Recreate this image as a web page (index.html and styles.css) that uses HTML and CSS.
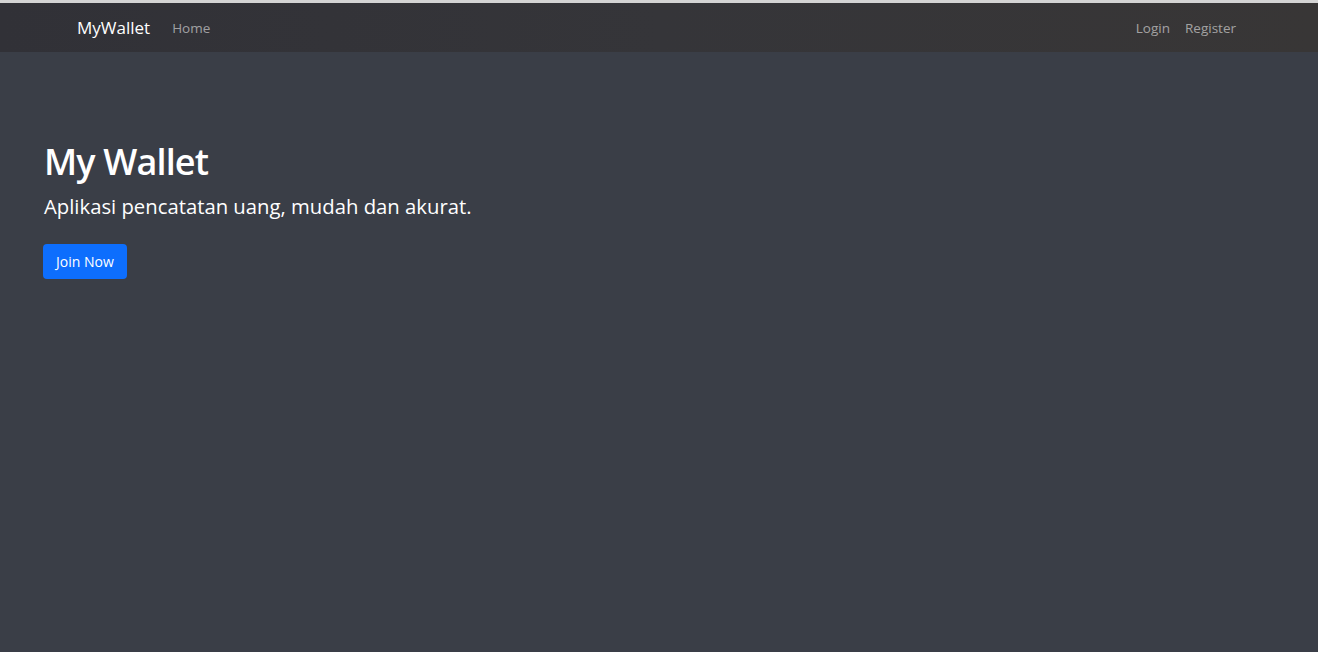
FILE: index.html
```html
<!DOCTYPE html>
<html lang="id">
<head>
<meta charset="utf-8">
<title>MyWallet</title>
<link rel="stylesheet" href="styles.css">
</head>
<body>
<div class="topline"></div>
<nav class="navbar">
  <div class="nav-left">
    <a class="brand" href="#">MyWallet</a>
    <a class="nav-link" href="#">Home</a>
  </div>
  <div class="nav-right">
    <a class="nav-link" href="#">Login</a>
    <a class="nav-link" href="#">Register</a>
  </div>
</nav>
<main class="hero">
  <h1 class="title">My Wallet</h1>
  <p class="lead">Aplikasi pencatatan uang, mudah dan akurat.</p>
  <a class="btn" href="#">Join Now</a>
</main>
</body>
</html>
```
FILE: styles.css
```css
* { box-sizing: border-box; }
html, body { height: 100%; }
body {
  margin: 0;
  background: #3a3e47;
  font-family: "Open Sans", "Noto Sans", sans-serif;
  color: #fff;
  display: flex;
  flex-direction: column;
}
a { text-decoration: none; }
.topline {
  height: 3px;
  background: #d4d4d4;
}
.navbar {
  height: 49px;
  background: linear-gradient(90deg, #313137 0%, #353539 50%, #383636 100%);
  display: flex;
  align-items: center;
  justify-content: space-between;
  padding: 0 82px 0 77px;
}
.nav-left, .nav-right {
  display: flex;
  align-items: center;
}
.brand {
  color: #fff;
  font-size: 17px;
  margin-right: 22px;
}
.nav-link {
  color: rgba(255,255,255,0.55);
  font-size: 13.5px;
}
.nav-right .nav-link + .nav-link { margin-left: 15px; }
.hero {
  flex: 1;
  padding: 88px 44px 0;
}
.title {
  margin: 0;
  font-size: 36px;
  letter-spacing: -0.85px;
  font-weight: 600;
  line-height: 1.2;
}
.lead {
  margin: 10px 0 0;
  font-size: 20.3px;
  font-weight: 400;
  line-height: 1.3;
}
.btn {
  display: inline-block;
  margin-top: 24px;
  margin-left: -1px;
  background: #0d6efd;
  color: #fff;
  font-size: 14px;
  height: 35px;
  line-height: 35px;
  padding: 0 13px;
  border-radius: 4px;
}
```
